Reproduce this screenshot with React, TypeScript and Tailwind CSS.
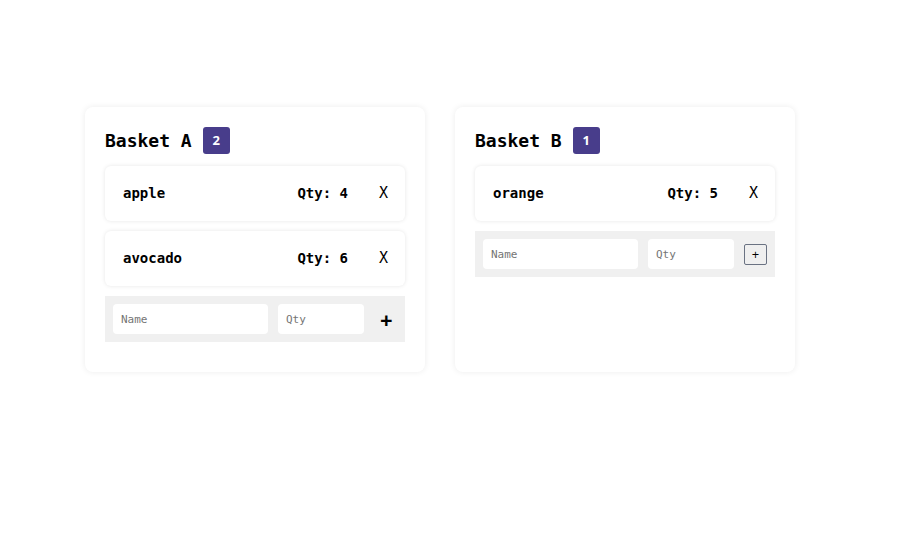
import React from 'react';

type Item = { name: string; qty: number };

const mono = { fontFamily: '"DejaVu Sans Mono", "Liberation Mono", monospace' };

const baskets: { title: string; items: Item[]; plain: boolean }[] = [
  { title: 'Basket A', items: [{ name: 'apple', qty: 4 }, { name: 'avocado', qty: 6 }], plain: true },
  { title: 'Basket B', items: [{ name: 'orange', qty: 5 }], plain: false },
];

const Basket: React.FC<{ title: string; items: Item[]; plain: boolean }> = ({ title, items, plain }) => {
  return (
    <div className="flex w-[340px] flex-col rounded-lg bg-white px-5 pb-[30px] pt-5 shadow-[0_0_6px_rgba(0,0,0,0.08)]">
      <div className="flex h-[27px] items-center gap-[11px]">
        <h2 className="text-[18px] font-bold leading-none text-black">{title}</h2>
        <span
          className="flex h-[27px] w-[27px] items-center justify-center rounded-[3px] bg-[#483d8b] text-[13px] font-bold text-white"
          style={{ fontFamily: '"Open Sans", sans-serif' }}
        >
          {items.length}
        </span>
      </div>

      <div className="mt-3 flex flex-col gap-[10px]">
        {items.map((it) => (
          <div
            key={it.name}
            className="flex h-[55px] items-center rounded-md bg-white pl-[18px] pr-[17px] shadow-[0_0_4px_rgba(0,0,0,0.1)]"
          >
            <span className="flex-1 text-[14px] font-bold text-black">{it.name}</span>
            <span className="text-[14px] font-bold text-black">Qty: {it.qty}</span>
            <button className="ml-[31px] text-[15px] leading-none text-black">X</button>
          </div>
        ))}

        <form className="flex h-[46px] items-center gap-[10px] bg-[#f0f0f0] px-2" onSubmit={(e) => e.preventDefault()}>
          <input
            placeholder="Name"
            className="h-[30px] w-[155px] shrink-0 rounded bg-white px-2 text-[11px] outline-none placeholder:text-[#757575]"
            style={mono}
          />
          <input
            placeholder="Qty"
            className="h-[30px] w-[86px] shrink-0 rounded bg-white px-2 text-[11px] outline-none placeholder:text-[#757575]"
            style={mono}
          />
          {plain ? (
            <button
              className="ml-[6px] text-[22px] font-bold leading-none text-black"
              style={{ fontFamily: '"Open Sans", sans-serif' }}
            >
              +
            </button>
          ) : (
            <button
              className="flex h-[21px] w-[23px] shrink-0 items-center justify-center rounded-[2px] border border-gray-500 bg-[#efefef] text-[13px] leading-none text-black"
              style={{ fontFamily: '"Open Sans", sans-serif' }}
            >
              +
            </button>
          )}
        </form>
      </div>
    </div>
  );
};

const App: React.FC = () => {
  return (
    <div className="min-h-[543px] bg-white" style={mono}>
      <div className="flex items-stretch gap-[30px] pl-[85px] pt-[107px]">
        {baskets.map((b) => (
          <Basket key={b.title} {...b} />
        ))}
      </div>
    </div>
  );
};

export default App;
